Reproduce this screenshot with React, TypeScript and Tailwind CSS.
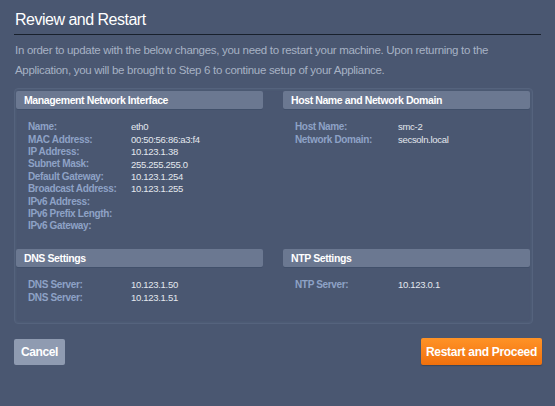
import React from "react";

type Row = [string, string];

const mgmt: Row[] = [
  ["Name:", "eth0"],
  ["MAC Address:", "00:50:56:86:a3:f4"],
  ["IP Address:", "10.123.1.38"],
  ["Subnet Mask:", "255.255.255.0"],
  ["Default Gateway:", "10.123.1.254"],
  ["Broadcast Address:", "10.123.1.255"],
  ["IPv6 Address:", ""],
  ["IPv6 Prefix Length:", ""],
  ["IPv6 Gateway:", ""],
];

const host: Row[] = [
  ["Host Name:", "smc-2"],
  ["Network Domain:", "secsoln.local"],
];

const dns: Row[] = [
  ["DNS Server:", "10.123.1.50"],
  ["DNS Server:", "10.123.1.51"],
];

const ntp: Row[] = [["NTP Server:", "10.123.0.1"]];

function Section({ title, rows }: { title: string; rows: Row[] }) {
  return (
    <div>
      <div className="h-[18px] rounded-[2px] bg-[#6b7891] pl-2 text-[10.5px] font-bold leading-[18px] tracking-[-0.4px] text-white shadow-[0_1px_0_#41506a]">
        {title}
      </div>
      <div className="pl-3 pt-[12px]">
        {rows.map(([label, value], i) => (
          <div key={i} className="flex h-[12.4px] items-center leading-none">
            <span className="w-[103px] shrink-0 text-[10px] font-bold tracking-[-0.35px] text-[#8ea2c6]">{label}</span>
            <span className="text-[9.5px] tracking-[-0.3px] text-[#e3e7ee]">{value}</span>
          </div>
        ))}
      </div>
    </div>
  );
}

export default function App() {
  return (
    <div
      className="h-[406px] w-[555px] overflow-hidden bg-[#4a5771]"
      style={{ fontFamily: '"Liberation Sans", Arial, sans-serif' }}
    >
      <div className="px-[14px] pt-[9px]">
        {/* Heading */}
        <h1 className="border-b border-[#18202c] pb-[3px] pl-[1px] text-[16px] leading-[22px] tracking-[-0.5px] text-white">
          Review and Restart
        </h1>
        <p className="mt-[5px] pl-[1px] text-[11.5px] leading-[20px] tracking-[-0.3px] text-[#a7b2c4]">
          In order to update with the below changes, you need to restart your machine. Upon returning to the
          Application, you will be brought to Step 6 to continue setup of your Appliance.
        </p>

        {/* Summary panel */}
        <div className="mt-[8px] mr-[8px] h-[236px] rounded-[4px] border border-[#55637d] pt-[2px] pl-[1px] pr-[2px] shadow-[inset_0_0_3px_#56647e]">
          <div className="grid grid-cols-2 gap-x-[20px]">
            <div className="h-[158px]">
              <Section title="Management Network Interface" rows={mgmt} />
            </div>
            <div className="h-[158px]">
              <Section title="Host Name and Network Domain" rows={host} />
            </div>
            <Section title="DNS Settings" rows={dns} />
            <Section title="NTP Settings" rows={ntp} />
          </div>
        </div>

        {/* Actions */}
        <div className="mt-[14px] flex items-center justify-between">
          <button className="h-[26px] w-[51px] rounded-[2px] bg-[#8f9bb1] text-[12px] font-bold tracking-[-0.4px] text-white">
            Cancel
          </button>
          <button className="mr-[-1px] h-[27px] w-[121px] rounded-[2px] bg-gradient-to-b from-[#ff9326] to-[#f0700c] text-[12px] font-bold tracking-[-0.3px] text-white shadow-[0_1px_1px_#3a4558]">
            Restart and Proceed
          </button>
        </div>
      </div>
    </div>
  );
}
